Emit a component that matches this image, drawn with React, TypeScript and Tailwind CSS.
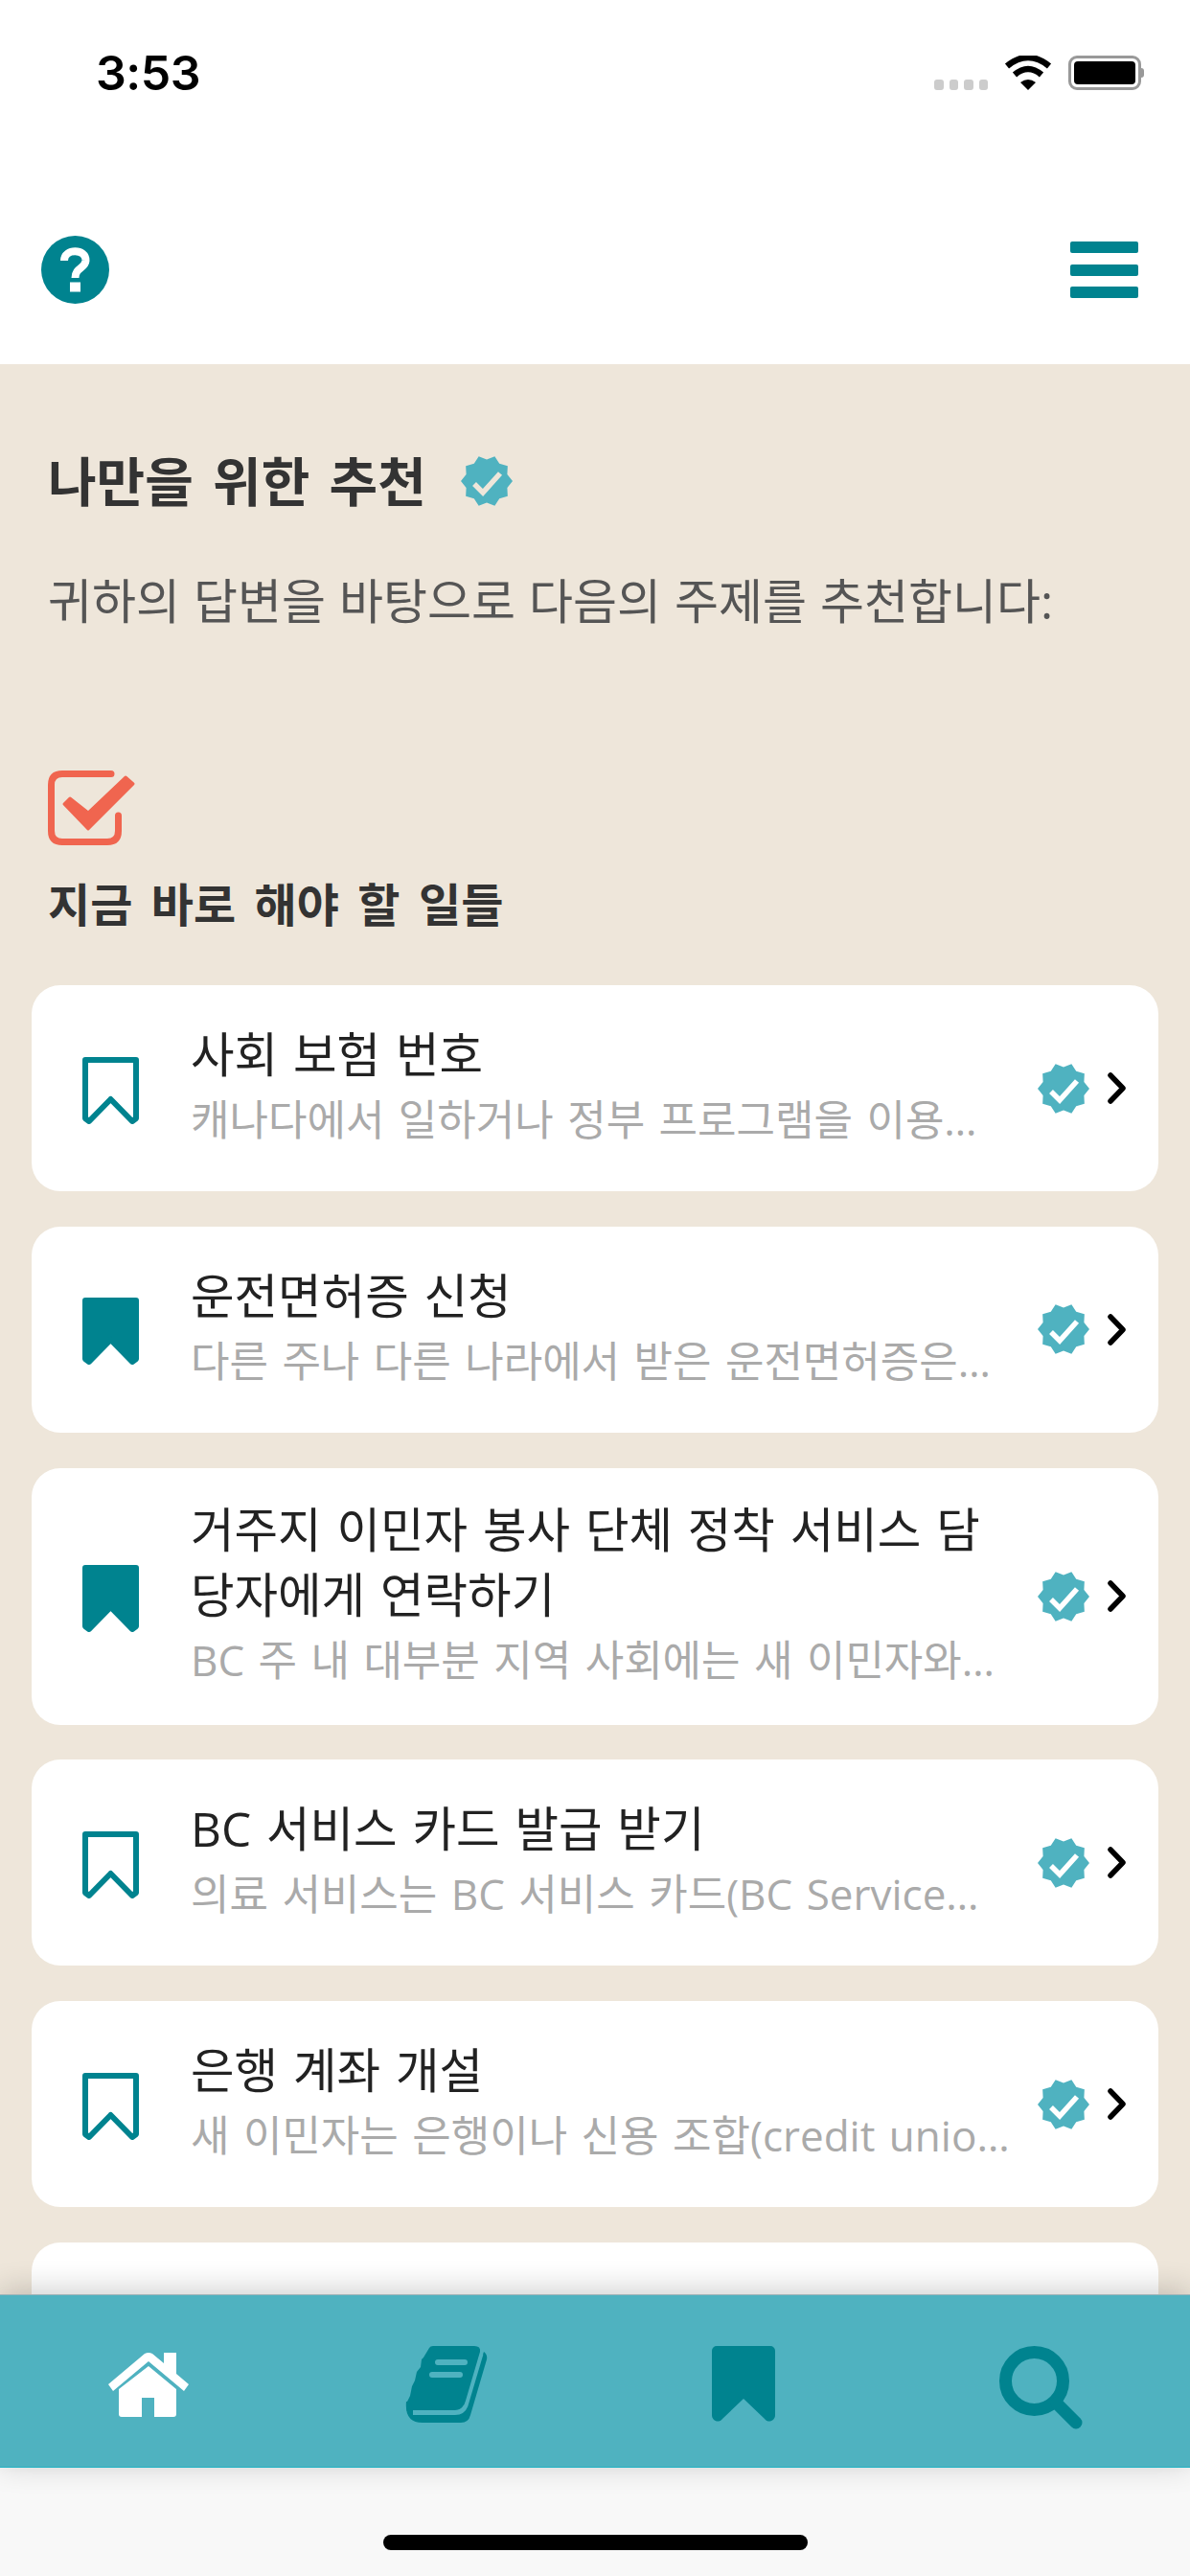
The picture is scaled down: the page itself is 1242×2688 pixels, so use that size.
const TEAL = "#00838F";
const AQUA = "#4FB2C0";

const starPoints = (() => {
  const pts: string[] = [];
  for (let i = 0; i < 20; i++) {
    const r = i % 2 === 0 ? 27 : 22.5;
    const a = (i * Math.PI) / 10;
    pts.push(`${(27 + r * Math.cos(a)).toFixed(2)},${(27 + r * Math.sin(a)).toFixed(2)}`);
  }
  return pts.join(" ");
})();

function Badge({ check }: { check: string }) {
  return (
    <svg width="54" height="54" viewBox="0 0 54 54" className="shrink-0">
      <polygon points={starPoints} fill={AQUA} />
      <path d="M14 30L23 39L41 19" fill="none" stroke={check} strokeWidth="5.5" />
    </svg>
  );
}

function RowBookmark({ filled }: { filled: boolean }) {
  return (
    <svg width="59" height="72" viewBox="0 0 59 72" className="shrink-0 mt-[6px]">
      <path
        d="M3 3H56V64L52 67L29.5 44L7 67L3 64Z"
        fill={filled ? TEAL : "none"}
        stroke={TEAL}
        strokeWidth="6"
        strokeLinejoin="round"
      />
    </svg>
  );
}

function Card({ title, sub, filled }: { title: string; sub: string; filled: boolean }) {
  return (
    <div className="flex items-center min-h-[215px] py-[30.5px] pl-[53px] pr-[34px] bg-white rounded-[30px]">
      <RowBookmark filled={filled} />
      <div className="flex-1 min-w-0 ml-[54px] mr-[24px] pb-[3px]">
        <div className="text-[49.5px] leading-[68px] text-[#222] [word-spacing:3px]">{title}</div>
        <div className="text-[44px] leading-[68px] text-[#aaaaaa] whitespace-nowrap overflow-hidden [word-spacing:3px]">{sub}</div>
      </div>
      <Badge check="#ffffff" />
      <svg width="19" height="33" viewBox="0 0 19 33" className="shrink-0 ml-[19px]">
        <path d="M3 3L16 16.5L3 30" fill="none" stroke="#000" strokeWidth="5.5" strokeLinecap="round" strokeLinejoin="round" />
      </svg>
    </div>
  );
}

const rows = [
  { title: "사회 보험 번호", sub: "캐나다에서 일하거나 정부 프로그램을 이용…", filled: false },
  { title: "운전면허증 신청", sub: "다른 주나 다른 나라에서 받은 운전면허증은…", filled: true },
  { title: "거주지 이민자 봉사 단체 정착 서비스 담당자에게 연락하기", sub: "BC 주 내 대부분 지역 사회에는 새 이민자와…", filled: true },
  { title: "BC 서비스 카드 발급 받기", sub: "의료 서비스는 BC 서비스 카드(BC Service…", filled: false },
  { title: "은행 계좌 개설", sub: "새 이민자는 은행이나 신용 조합(credit unio…", filled: false },
  { title: "BCID 등록", sub: "", filled: false },
];

export default function App() {
  return (
    <div className="w-[1242px] h-[2688px] flex flex-col overflow-hidden bg-[#EEE6DA] [font-family:'Open_Sans','Noto_Sans_CJK_KR',sans-serif]">
      <header className="h-[380px] shrink-0 bg-white">
        <div className="flex justify-between items-start h-[36px] mt-[58px] pl-[100px] pr-[48px] pt-0">
          <span className="text-[50px] leading-[36px] font-semibold text-black [font-family:Inter,sans-serif] tracking-[-0.5px]">3:53</span>
          <div className="flex items-start">
            <div className="flex gap-[6px] mt-[25px]">
              <i className="block w-[9.5px] h-[11px] rounded-[3px] bg-[#cccccc]" />
              <i className="block w-[9.5px] h-[11px] rounded-[3px] bg-[#cccccc]" />
              <i className="block w-[9.5px] h-[11px] rounded-[3px] bg-[#cccccc]" />
              <i className="block w-[9.5px] h-[11px] rounded-[3px] bg-[#cccccc]" />
            </div>
            <svg width="50" height="36" viewBox="0 0 50 36" className="ml-[17px]">
              <path d="M3 11Q25 -7 47 11" fill="none" stroke="#000" strokeWidth="6.5" />
              <path d="M11 20Q25 8 39 20" fill="none" stroke="#000" strokeWidth="6.5" />
              <path d="M17 28Q25 22 33 28L25 36Z" fill="#000" />
            </svg>
            <div className="flex items-center ml-[17px]">
              <div className="w-[76px] h-[36px] rounded-[9px] border-[3px] border-[#999999] p-[3px]">
                <div className="w-full h-full rounded-[4px] bg-black" />
              </div>
              <div className="w-[3px] h-[10px] rounded-r-[3px] bg-[#999999]" />
            </div>
          </div>
        </div>
        <div className="flex justify-between items-center mt-[152px] pl-[43px] pr-[54px]">
          <svg width="71" height="71" viewBox="0 0 71 71">
            <circle cx="35.5" cy="35.5" r="35.5" fill={TEAL} />
            <path d="M24 26C24 13 47 13 46.5 26C46 34 35.5 33 35.5 44" fill="none" stroke="#fff" strokeWidth="8" />
            <rect x="30" y="48.5" width="11" height="10" fill="#fff" />
          </svg>
          <div className="w-[71px] h-[59px] flex flex-col justify-between">
            <div className="h-[12px] rounded-[2px] bg-[#00838F]" />
            <div className="h-[12px] rounded-[2px] bg-[#00838F]" />
            <div className="h-[12px] rounded-[2px] bg-[#00838F]" />
          </div>
        </div>
      </header>

      <main className="flex-1 min-h-0 overflow-hidden px-[33px] pt-[87px]">
        <div className="flex items-center h-[70px] pl-[17px]">
          <h1 className="text-[55px] leading-[70px] font-bold text-[#333333] [word-spacing:6px]">나만을 위한 추천</h1>
          <div className="ml-[36px]"><Badge check="#EEE6DA" /></div>
        </div>
        <p className="mt-[56px] pl-[17px] text-[50px] leading-[68px] text-[#555555] [word-spacing:1px] whitespace-nowrap">
          귀하의 답변을 바탕으로 다음의 주제를 추천합니다:
        </p>
        <svg width="92" height="78" viewBox="0 0 92 78" className="block mt-[143px] ml-[17px]">
          <path d="M73.5 47V63Q73.5 74.5 62 74.5H15Q3.5 74.5 3.5 63V15Q3.5 3.5 15 3.5H66" fill="none" stroke="#F0654F" strokeWidth="7" strokeLinecap="round" />
          <path d="M17 35L23 29L42 44L81 7L89 14L42 61Z" fill="#F0654F" stroke="#F0654F" strokeWidth="3" strokeLinejoin="round" />
        </svg>
        <h2 className="mt-[28px] pl-[17px] text-[48px] leading-[68px] font-bold text-[#333333] [word-spacing:7px]">지금 바로 해야 할 일들</h2>
        <div className="mt-[50px] flex flex-col gap-[36.8px]">
          {rows.map((r) => (
            <Card key={r.title} title={r.title} sub={r.sub} filled={r.filled} />
          ))}
        </div>
      </main>

      <nav className="relative z-10 h-[181px] shrink-0 grid grid-cols-4 justify-items-center items-start pt-[53px] bg-[#4FB2C0] border-t border-[#9fb4b8] border-b border-b-[#22b3c4] shadow-[0_-4px_30px_rgba(0,0,0,0.2)]">
        <svg width="84" height="67" viewBox="0 0 84 67" className="mt-[7px]">
          <path d="M0 33L38 1Q42 -1 46 1L58 11V0H71V22L84 33L79 40L42 9L5 40Z" fill="#fff" />
          <path d="M42 14L71 38V64Q71 67 68 67H48V47H35V67H14Q11 67 11 64V38Z" fill="#fff" />
        </svg>
        <svg width="86" height="80" viewBox="0 0 86 80">
          <path d="M82 6Q86 9 85 14L68 72Q66 80 58 80H18Q-1 80 1 58L62 60Z" fill={TEAL} />
          <path d="M8 69.5H52Q60 69.5 63 62L79 8" fill="none" stroke={AQUA} strokeWidth="5" />
          <path d="M25 2Q26 0 29 0H72Q79 0 78 6L63 57Q61 66 52 66H8Q3 66 1.5 68L2 58L5 52L7 42L10 36L12 27L16 22L17 14L19 12Z" fill={TEAL} />
          <path d="M34 17H62M28 30H57" fill="none" stroke={AQUA} strokeWidth="6" strokeLinecap="round" />
        </svg>
        <svg width="66" height="80" viewBox="0 0 66 80">
          <path d="M5 0H61a5 5 0 0 1 5 5V72c0 6-7 9-11 4L33 55 11 76c-4 5-11 2-11-4V5a5 5 0 0 1 5-5z" fill={TEAL} />
        </svg>
        <svg width="87" height="87" viewBox="0 0 87 87">
          <circle cx="36.5" cy="36.5" r="30" fill="none" stroke={TEAL} strokeWidth="13" />
          <path d="M60 60L80 80" fill="none" stroke={TEAL} strokeWidth="13" strokeLinecap="round" />
        </svg>
      </nav>

      <div className="h-[113px] shrink-0 flex justify-center pt-[70px] bg-[#f8f8f8]">
        <div className="w-[443px] h-[16px] rounded-full bg-black" />
      </div>
    </div>
  );
}
